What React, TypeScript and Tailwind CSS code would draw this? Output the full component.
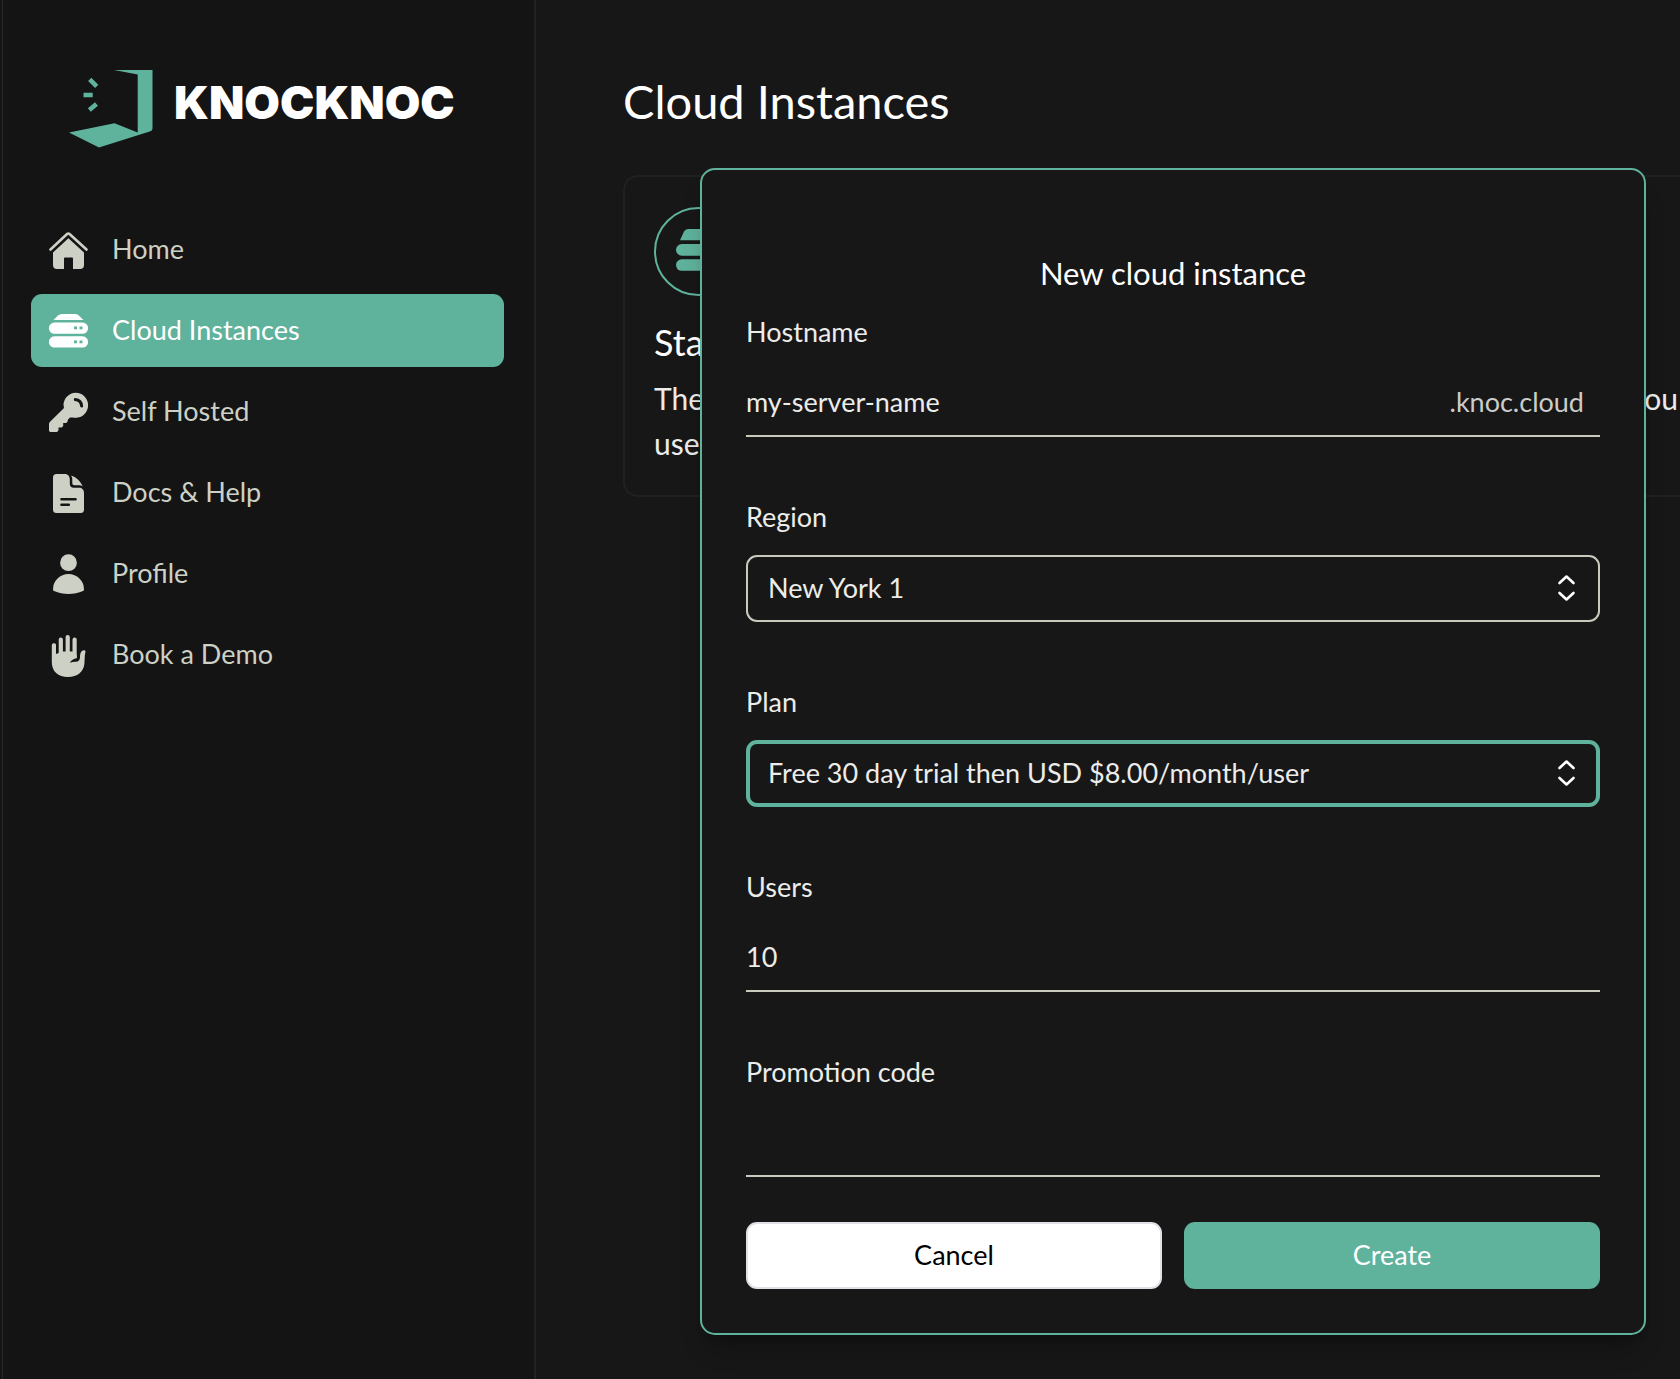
import { ComponentProps, ReactNode, useState } from "react";

type IconName = "home" | "cloud" | "key" | "doc" | "user" | "hand";

const NAV: { icon: IconName; label: string }[] = [
  { icon: "home", label: "Home" },
  { icon: "cloud", label: "Cloud Instances" },
  { icon: "key", label: "Self Hosted" },
  { icon: "doc", label: "Docs & Help" },
  { icon: "user", label: "Profile" },
  { icon: "hand", label: "Book a Demo" },
];

const ICONS: Record<IconName, ReactNode> = {
  home: (
    <>
      <path d="M2.5 19.5 18.8 4.2a2.2 2.2 0 0 1 3 0L38.5 19.5" fill="none" stroke="currentColor" strokeWidth={2.6} strokeLinecap="round" strokeLinejoin="round" />
      <path d="M20.4 8.3 36 22.6V35a4 4 0 0 1-4 4h-7V28.5a1 1 0 0 0-1-1h-7a1 1 0 0 0-1 1V39H9a4 4 0 0 1-4-4V22.6z" />
    </>
  ),
  cloud: (
    <>
      <path d="M10 4.5C12 3 13 3 15 3h11c2 0 3 0 4.800 1.400L35.500 9H5.500z" />
      <path fillRule="evenodd" d="M6.500 11.500h28a5.600 5.600 0 0 1 0 11.300h-28a5.600 5.600 0 0 1 0-11.300zM26 15.600v2.600h3v-2.600zM31.500 15.600v2.600h3v-2.600z" />
      <path fillRule="evenodd" d="M6.500 25.300h28a5.600 5.600 0 0 1 0 11.300h-28a5.600 5.600 0 0 1 0-11.300zM26 29.600v2.600h3v-2.600zM31.500 29.600v2.600h3v-2.600z" />
    </>
  ),
  key: (
    <>
      <path d="M27.5.8a12.5 12.5 0 1 1-3 24.600l-2.500.2-2.300 2.400v1.500l-1.500 1.500h-3v3l-1.500 1.500h-3.200v3l-1.500 1.500H2.200L1 39V32.5c0-1.300.4-2 1.300-2.900L15.800 16.200c.2-1 .1-1.700-.3-3.200A12.5 12.5 0 0 1 27.5.8z" />
      <path d="M27.300 7.500c3.700.3 6 2.700 6.300 6.500" fill="none" stroke="#141414" strokeWidth={3} strokeLinecap="round" />
    </>
  ),
  doc: (
    <>
      <path d="M8.500 1H17c3 0 4.800 2.400 4.800 5.500v4.200c0 2.500 1.500 4 4 4H31c3 0 5 2 5 5V36.500a3.500 3.500 0 0 1-3.500 3.500h-24A3.500 3.500 0 0 1 5 36.500v-32A3.500 3.500 0 0 1 8.500 1z" />
      <path d="M23 2.500c5 1.500 9.500 5.700 11.700 11-1.500-1-2.500-1.200-4-1.200H26.500c-1.400 0-2.200-.8-2.200-2.200V6.500C24.300 5 24 3.700 23 2.500z" />
      <path d="M13.500 26.300h14M13.500 31.700h7.300" stroke="#141414" strokeWidth={2.6} strokeLinecap="round" />
    </>
  ),
  user: (
    <>
      <circle cx={20.5} cy={8.7} r={8.4} />
      <path d="M5 35.500a15.500 15.500 0 0 1 31 0c0 .7-.3 1.200-1 1.600-9 4-20 4-29 0-.7-.4-1-.9-1-1.600z" />
    </>
  ),
  hand: (
    <path d="M5.500 8.300a1.900 1.900 0 0 1 2.500 1.900V19l2.700-1V4.500a2.100 2.100 0 0 1 4.200 0V16.500h2.700V2a2.100 2.100 0 0 1 4.200 0v14.500h2.700V4.500a2.100 2.100 0 0 1 4.200 0V18l.3 5c-3.500.8-5.600 2.300-7.200 4.800 2-.6 3.800-1 5.700-1 3.100.1 4.500-1.700 4.500-4.500 0-3.500.5-5.200 2.200-6.500 1.300-1 3.300-.6 3.300.9 0 1.200-.6 1.700-.7 4.600l-.4 7.500C35.500 37 29.500 42 20 42 10 42 3.800 36.500 3.800 27V10.500c0-1.200.6-1.900 1.700-2.200z" />
  ),
};

function Icon({ name }: { name: IconName }) {
  return (
    <svg className="w-10 h-10 shrink-0 overflow-visible" viewBox="0 0 40 40" fill="currentColor" aria-hidden="true">
      {ICONS[name]}
    </svg>
  );
}

function Logo() {
  return (
    <a href="#" className="flex items-start gap-5 pl-[38px] text-white">
      <svg className="w-[85px] h-[78px] shrink-0" viewBox="0 0 85 78" fill="#5fb29c" aria-hidden="true">
        <path d="M45 0h38.500v58.500a3 3 0 0 1-2 2.700L30 77.500 0 62.500 45.500 53.300 68.700 62.500V4.500z" />
        <path d="M20.700 9.300l7 7M14.500 25h9.200M27.500 34l-7.200 6" stroke="#5fb29c" strokeWidth={4.6} />
      </svg>
      <span className="font-['Inter',sans-serif] text-[46px] leading-[64px] font-black">KNOCKNOC</span>
    </a>
  );
}

function Field({ id, label, children }: { id: string; label: string; children: ReactNode }) {
  return (
    <div>
      <label htmlFor={id} className="block leading-8 mb-[22px]">{label}</label>
      {children}
    </div>
  );
}

const inputCls = "w-full min-w-0 flex-1 bg-transparent outline-none";

function Select({ active, ...props }: ComponentProps<"select"> & { active?: boolean }) {
  return (
    <div className="relative">
      <select
        {...props}
        className={`block w-full h-[67px] appearance-none rounded-[11px] bg-[#171717] outline-none ${active ? "border-4 border-[#5fb29c] px-[18px]" : "border-2 border-[#c8cabe] px-5"}`}
      />
      <svg className="absolute right-5 top-4 w-[26px] h-[34px] pointer-events-none" viewBox="0 0 26 34" fill="none" stroke="#fff" strokeWidth={2.6} strokeLinecap="round" strokeLinejoin="round" aria-hidden="true">
        <path d="M5.500 12 12.500 5.500l7 6.500M5.500 22 12.500 28.500l7-6.500" />
      </svg>
    </div>
  );
}

function NewInstanceDialog() {
  const [hostname, setHostname] = useState("my-server-name");
  const [users, setUsers] = useState("10");
  const [promo, setPromo] = useState("");

  const lineCls = "flex items-center h-[67px] border-b-2 border-[#c8cabe]";

  return (
    <div className="absolute inset-0 flex items-start pl-[700px] pr-[34px] pt-[168px]">
      <form role="dialog" aria-labelledby="dialog-title" onSubmit={(e) => e.preventDefault()}
        className="flex-1 min-w-0 rounded-[15px] border-2 border-[#5fb29c] bg-[#171717] px-11 pt-[83px] pb-11 text-[27px] text-[#ececea] shadow-xl shadow-black/20">
        <h2 id="dialog-title" className="text-center text-[31px] leading-10 text-white mb-[23px]">New cloud instance</h2>

        <div className="space-y-16">
          <Field id="hostname" label="Hostname">
            <div className={lineCls}>
              <input id="hostname" value={hostname} onChange={(e) => setHostname(e.target.value)} className={inputCls} />
              <span className="pr-4 text-[#cbcccb]">.knoc.cloud</span>
            </div>
          </Field>
          <Field id="region" label="Region">
            <Select id="region">
              <option>New York 1</option>
            </Select>
          </Field>
          <Field id="plan" label="Plan">
            <Select id="plan" active>
              <option>Free 30 day trial then USD $8.00/month/user</option>
            </Select>
          </Field>
          <Field id="users" label="Users">
            <div className={lineCls}>
              <input id="users" inputMode="numeric" value={users} onChange={(e) => setUsers(e.target.value)} className={inputCls} />
            </div>
          </Field>
          <Field id="promo" label="Promotion code">
            <div className={lineCls}>
              <input id="promo" value={promo} onChange={(e) => setPromo(e.target.value)} className={inputCls} />
            </div>
          </Field>
        </div>

        <div className="grid grid-cols-2 gap-[22px] mt-[45px]">
          <button type="button" className="h-[67px] rounded-[11px] border-2 border-[#dfe1e6] bg-white text-black">Cancel</button>
          <button type="submit" className="h-[67px] rounded-[11px] bg-[#5fb29c] text-white">Create</button>
        </div>
      </form>
    </div>
  );
}

export default function App() {
  return (
    <div className="relative flex min-h-screen overflow-hidden bg-[#171717] font-['Lato',sans-serif] text-white">
      <aside className="w-[536px] shrink-0 border-r-2 border-[#222222] bg-[#141414] pl-[2px]">
        <div className="min-h-full border-l border-[#2a2a2a] pl-7 pr-[30px] pt-[70px]">
          <Logo />
          <nav className="mt-[65px] space-y-2">
            {NAV.map(({ icon, label }) => (
              <a key={label} href="#"
                className={`flex items-center gap-6 h-[73px] px-[17px] rounded-[11px] text-[27px] ${label === "Cloud Instances" ? "bg-[#5fb29c] text-white" : "text-[#cdd0c5]"}`}>
                <Icon name={icon} />
                {label}
              </a>
            ))}
          </nav>
        </div>
      </aside>

      <main className="flex-1 min-w-0 pl-[87px] pt-[69px]">
        <h1 className="text-[47px] leading-[64px]">Cloud Instances</h1>
        <section className="mt-[42px] h-[322px] rounded-l-[15px] border-2 border-r-0 border-[#202020] pl-[29px] pt-[30px]">
          <div className="flex items-start justify-center w-[89px] h-[89px] rounded-full border-2 border-[#5fb29c] pt-5 text-[#5fb29c]">
            <svg className="w-[45px] h-[42px]" viewBox="0 0 45 42" fill="currentColor" aria-hidden="true">
              <path d="M12 0h21a5 5 0 0 1 4 2.500L41 11.200H4L8 2.500A5 5 0 0 1 12 0z" />
              <rect y={15} width={45} height={11.7} rx={5.8} />
              <rect y={30.3} width={45} height={11.5} rx={5.7} />
            </svg>
          </div>
          <h2 className="mt-5 text-[36px] leading-[52px]">Sta</h2>
          <div className="flex justify-between text-[30px] leading-[45px] text-[#ececea] pr-[2px] mt-2">
            <p>The<br />use</p>
            <p>ou</p>
          </div>
        </section>
      </main>

      <NewInstanceDialog />
    </div>
  );
}
